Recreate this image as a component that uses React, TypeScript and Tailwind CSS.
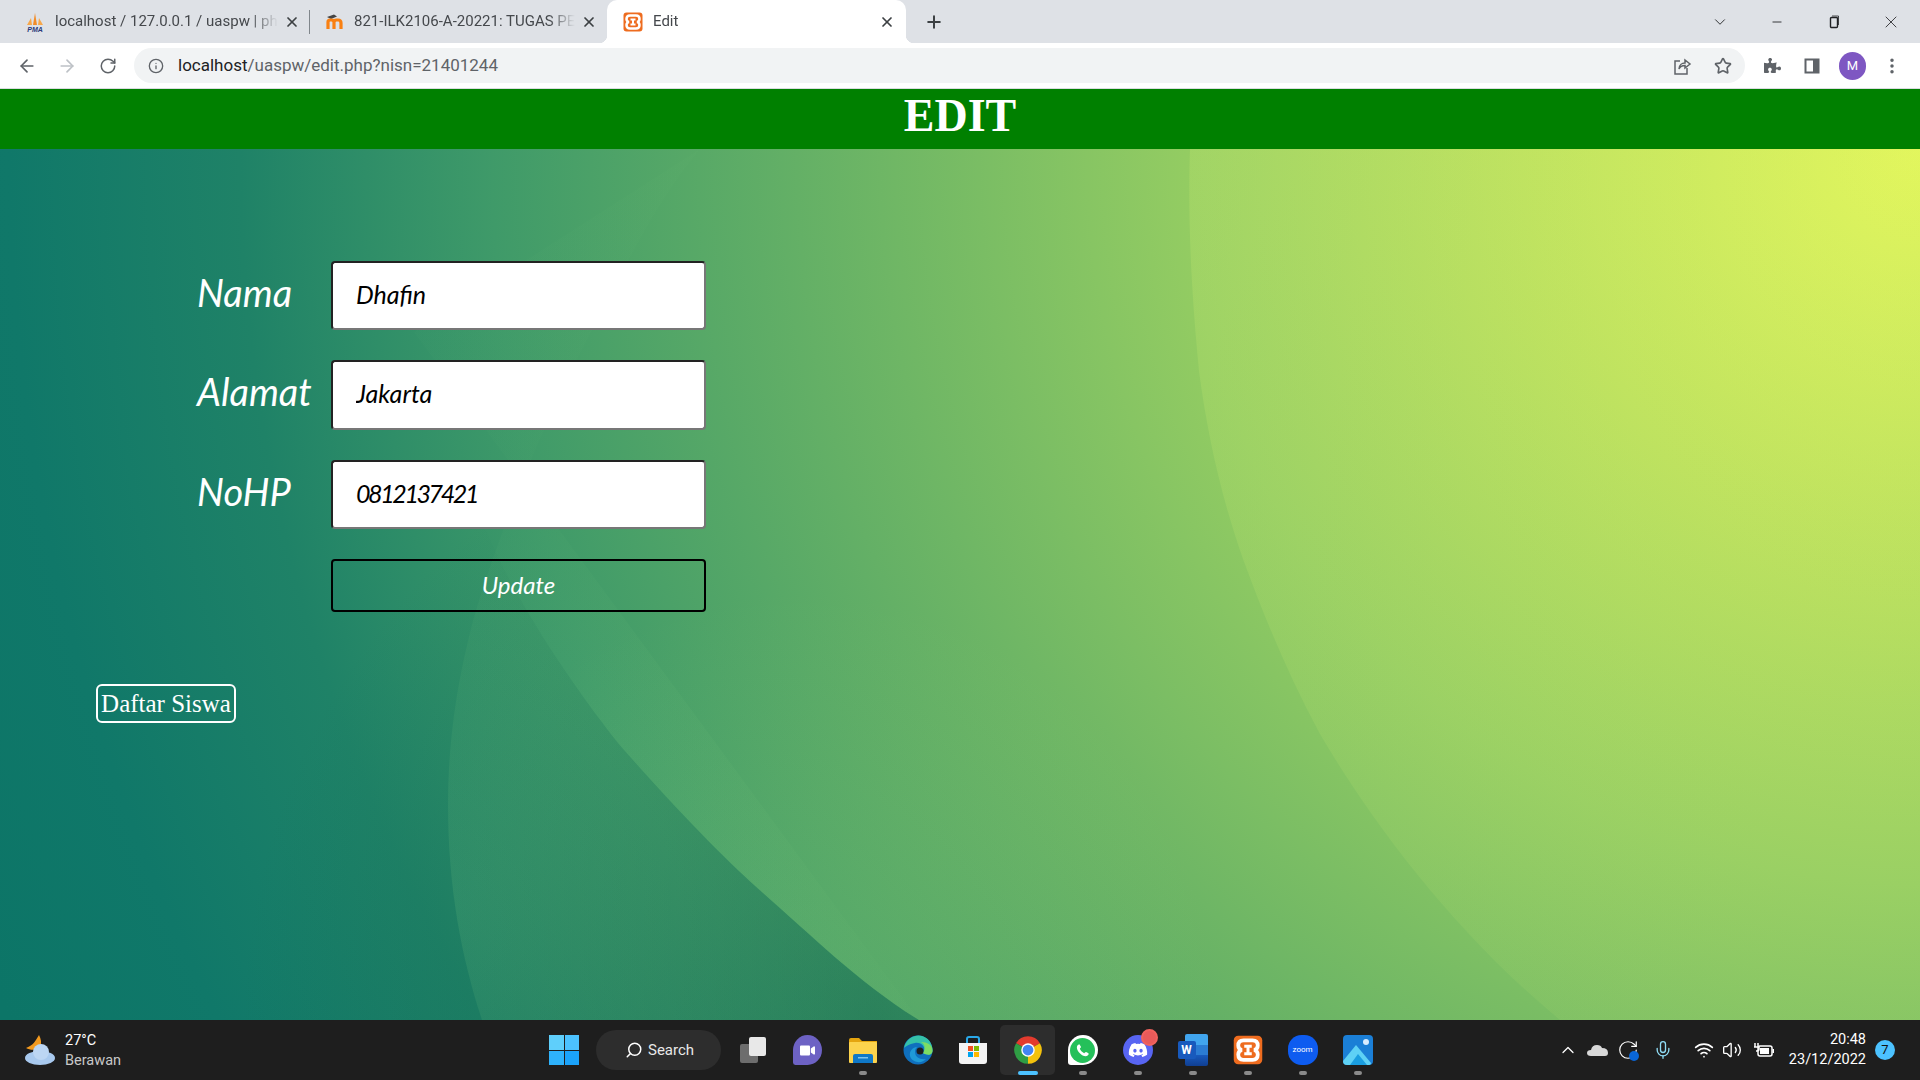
import {
  ArrowLeft,
  ArrowRight,
  ChevronDown,
  ChevronUp,
  Info,
  Mic,
  Minus,
  MoreVertical,
  Plus,
  RotateCw,
  Search,
  Star,
  Volume2,
  Wifi,
  X,
} from "lucide-react";
import type { ReactNode } from "react";
import { FaDiscord, FaPuzzlePiece, FaVideo } from "react-icons/fa";

function PmaIcon() {
  return (
    <svg width="20" height="20" viewBox="0 0 20 20">
      <path d="M2 13 L6 6 L7 13Z" fill="#f7a74a" />
      <path d="M8 13 L10 1 L12 13Z" fill="#f28c28" />
      <path d="M13 13 L14 6 L18 13Z" fill="#f7a74a" />
      <text x="10" y="19.5" textAnchor="middle" fontSize="7" fontWeight="700" fontStyle="italic" fill="#2b3a7a" fontFamily="Liberation Sans">
        PMA
      </text>
    </svg>
  );
}

function MoodleIcon() {
  return (
    <svg width="20" height="20" viewBox="0 0 20 20">
      <path d="M3 5 L10 2.5 L13 4.5 L7 7Z" fill="#444" />
      <path d="M4 17 V10 Q4 8 6 8 H7.5 Q10 8 10 10 V17 M10 10 Q10 8 12.5 8 H14 Q17 8 17 11 V17" fill="none" stroke="#f98012" strokeWidth="3.2" />
    </svg>
  );
}

function XamppIcon({ size = 20 }: { size?: number }) {
  return (
    <svg width={size} height={size} viewBox="0 0 20 20">
      <rect x="0.5" y="0.5" width="19" height="19" rx="3" fill="#ee6c1f" />
      <path d="M7 3.5 H13 Q16.5 3.5 16.5 7 Q16.5 9.5 14 10 Q16.5 10.5 16.5 13 Q16.5 16.5 13 16.5 H7 Q3.5 16.5 3.5 13 Q3.5 10.5 6 10 Q3.5 9.5 3.5 7 Q3.5 3.5 7 3.5Z" fill="none" stroke="#fff" strokeWidth="2.5" />
      <path d="M7.5 7.5 H12.5 M7.5 12.5 H12.5 M10 7.5 V12.5" stroke="#fff" strokeWidth="2" fill="none" />
    </svg>
  );
}

function Tab({ icon, title, box, active }: { icon: ReactNode; title: string; box: string; active?: boolean }) {
  return (
    <div className={`relative flex h-[43px] items-center ${box} ${active ? "rounded-t-[10px] bg-white" : ""}`}>
      {active && (
        <>
          <span className="absolute bottom-0 -left-[8px] h-[8px] w-[8px] bg-[radial-gradient(circle_at_0_0,transparent_8px,white_8.5px)]" />
          <span className="absolute -right-[8px] bottom-0 h-[8px] w-[8px] bg-[radial-gradient(circle_at_100%_0,transparent_8px,white_8.5px)]" />
        </>
      )}
      <span className="flex w-[30px] shrink-0">{icon}</span>
      <span className="flex-1 whitespace-nowrap text-[15px] text-[#45484c] [mask-image:linear-gradient(to_right,black_88%,transparent)]">
        {title}
      </span>
      <X size={16} strokeWidth={2.6} className="ml-[6px] shrink-0 text-[#3c4043]" />
    </div>
  );
}

function BrowserChrome() {
  return (
    <header className="shrink-0">
      <div className="flex h-[43px] items-center bg-[#dee1e6] pl-[8px]">
        <Tab icon={<PmaIcon />} title="localhost / 127.0.0.1 / uaspw | ph" box="w-[301px] pl-[17px] pr-[12px]" />
        <span className="h-[24px] w-px bg-[#80868b]" />
        <Tab icon={<MoodleIcon />} title="821-ILK2106-A-20221: TUGAS PE" box="w-[297px] pl-[14px] pr-[14px]" />
        <Tab icon={<XamppIcon />} title="Edit" box="w-[299px] pl-[16px] pr-[11px]" active />
        <Plus size={20} strokeWidth={2.4} className="ml-[18px] text-[#3c4043]" />
        <div className="ml-auto flex items-center text-[#202124]">
          <ChevronDown size={18} strokeWidth={1.2} className="mr-[41px]" />
          <Minus size={14} strokeWidth={1.5} className="mr-[43px]" />
          <svg width="14" height="14" viewBox="0 0 14 14" fill="none" stroke="currentColor" className="mr-[40px]">
            <rect x="3.5" y="2.5" width="7" height="10" rx="1" strokeWidth="1.4" />
            <path d="M5 1H11.5V10" strokeWidth="0.8" />
          </svg>
          <X size={20} strokeWidth={1} className="mr-[19px]" />
        </div>
      </div>
      <div className="flex h-[46px] items-center border-b border-[#dadce0] bg-white pl-[17px] pr-[17px]">
        <ArrowLeft size={20} strokeWidth={2} className="text-[#5f6368]" />
        <ArrowRight size={20} strokeWidth={2} className="ml-[20px] text-[#bdc1c6]" />
        <RotateCw size={18} strokeWidth={2} className="ml-[22px] text-[#5f6368]" />
        <div className="ml-[17px] flex h-[35px] w-[1611px] items-center rounded-full bg-[#f1f3f4] pl-[14px] pr-[13px]">
          <Info size={16} strokeWidth={2} className="text-[#5f6368]" />
          <span className="ml-[14px] text-[17px] text-[#5f6368]">
            <span className="text-[#202124]">localhost</span>/uaspw/edit.php?nisn=21401244
          </span>
          <svg width="20" height="20" viewBox="0 0 20 20" fill="none" stroke="#5f6368" strokeWidth="1.5" className="ml-auto mr-[22px]">
            <path d="M8 5H3V18H15V12" />
            <path d="M7 13C7 9 10 7 13 7V4L18 8L13 12V9.5C10 9.5 8 10.5 7 13Z" />
          </svg>
          <Star size={18} strokeWidth={2.2} className="text-[#5f6368]" />
        </div>
        <FaPuzzlePiece size={17} className="ml-[19px] text-[#5f6368]" />
        <svg width="16" height="16" viewBox="0 0 16 16" fill="none" className="ml-[23px]">
          <rect x="1.5" y="1.5" width="13" height="13" stroke="#5f6368" strokeWidth="2" />
          <rect x="9" y="1" width="6" height="14" fill="#5f6368" />
        </svg>
        <span className="ml-[19px] flex h-[28px] w-[27px] items-center justify-center rounded-full bg-[#7e57c2] text-[13px] text-white">M</span>
        <MoreVertical size={20} strokeWidth={2.2} className="ml-[16px] text-[#5f6368]" />
      </div>
    </header>
  );
}

function Wallpaper() {
  return (
    <svg className="absolute inset-0 h-full w-full" viewBox="0 0 1920 871" preserveAspectRatio="none">
      <defs>
        <radialGradient id="lensB" gradientUnits="userSpaceOnUse" cx="450" cy="760" r="420">
          <stop offset="0" stopColor="#8fdc8a" stopOpacity="0.13" />
          <stop offset="1" stopColor="#8fdc8a" stopOpacity="0.02" />
        </radialGradient>
        <radialGradient id="shadeC" gradientUnits="userSpaceOnUse" cx="880" cy="871" r="640">
          <stop offset="0" stopColor="#10664f" stopOpacity="0.55" />
          <stop offset="1" stopColor="#10664f" stopOpacity="0" />
        </radialGradient>
        <radialGradient id="lensC" gradientUnits="userSpaceOnUse" cx="800" cy="860" r="420">
          <stop offset="0" stopColor="#b4e870" stopOpacity="0.16" />
          <stop offset="1" stopColor="#b4e870" stopOpacity="0" />
        </radialGradient>
        <linearGradient id="lensA" gradientUnits="userSpaceOnUse" x1="1500" y1="0" x2="1500" y2="871">
          <stop offset="0" stopColor="#e4fb78" stopOpacity="0.17" />
          <stop offset="1" stopColor="#e4fb78" stopOpacity="0.07" />
        </linearGradient>
      </defs>
      <path d="M360 0 C380 90 395 140 414 183 C430 230 450 290 487 383 C510 440 560 520 618 594 C680 665 730 715 763 744 C810 785 860 835 919 871 H0 V0Z" fill="url(#shadeC)" />
      <path d="M700 0 C650 60 620 130 591 183 C550 260 499 381 473 472 C455 540 448 600 448 656 C448 740 462 810 482 871 H919 L414 183Z" fill="url(#lensB)" />
      <path d="M360 0 C380 90 395 140 414 183 C430 230 450 290 487 383 C510 440 560 520 618 594 C680 665 730 715 763 744 C810 785 860 835 919 871 H1920 V0Z" fill="url(#lensC)" />
      <path d="M1190 0 C1188 60 1190 130 1199 222 C1208 290 1222 350 1243 410 C1265 470 1290 530 1320 585 C1370 670 1450 780 1560 871 H1920 V0Z" fill="url(#lensA)" />
    </svg>
  );
}

const fields = [
  { label: "Nama", value: "Dhafin", spacing: "" },
  { label: "Alamat", value: "Jakarta", spacing: "" },
  { label: "NoHP", value: "0812137421", spacing: "tracking-[-2.4px]" },
];

function EditForm() {
  return (
    <main className="relative flex-1 overflow-hidden bg-[radial-gradient(circle_2100px_at_100%_0%,#e2f558_0%,#b8de5c_19%,#93cc62_35%,#3f9a69_68%,#1f8267_80%,#107869_91%,#0c7567_100%)] pl-[96px] pt-[111.8px]">
      <Wallpaper />
      <form className="relative ml-[101px] flex flex-col gap-[30px] font-[Lato,sans-serif] italic text-white">
        {fields.map((field) => (
          <div key={field.label} className="flex h-[69.5px] items-center">
            <label className="-mt-[7px] w-[134px] text-[38px]">{field.label}</label>
            <input
              readOnly
              value={field.value}
              className={`h-[69.5px] w-[375px] rounded-[4px] border-2 border-t-[#222] border-r-[#777] border-b-[#777] border-l-[#222] bg-white pb-[4px] pl-[23px] text-[25px] italic text-black outline-none ${field.spacing}`}
            />
          </div>
        ))}
        <button type="button" className="ml-[134px] h-[53px] w-[375px] rounded-[4px] border-2 border-black pb-[2px] text-[24px] text-white">
          Update
        </button>
      </form>
      <a href="#" className="relative mt-[72px] inline-block h-[39px] w-[140px] rounded-md border-2 border-white text-center font-['Liberation_Serif',serif] text-[25px] leading-[36px] text-white">
        Daftar Siswa
      </a>
    </main>
  );
}

function Slot({ children, dot }: { children: ReactNode; dot?: "grey" | "active" }) {
  return (
    <div className={`relative flex h-[50px] w-[55px] items-center justify-center rounded-[5px] ${dot === "active" ? "bg-[#2d2d2d]" : ""}`}>
      {children}
      {dot === "grey" && <span className="absolute bottom-[0px] h-[4px] w-[8px] rounded-full bg-[#8a8a8a]" />}
      {dot === "active" && <span className="absolute bottom-[0px] h-[4px] w-[20px] rounded-full bg-[#4cc2ff]" />}
    </div>
  );
}

function Taskbar() {
  return (
    <footer className="flex h-[60px] shrink-0 items-center bg-[#1e1e1e] text-white">
      <svg width="34" height="34" viewBox="0 0 34 34" className="ml-[23px] shrink-0">
        <path d="M16 2 C12 8 11 12 3 15 C8 18 15 17 17 14 C19 10 18 6 16 2Z" fill="#f39a1f" />
        <ellipse cx="17" cy="25" rx="15" ry="7" fill="#a8c9ee" />
        <circle cx="18" cy="19" r="8" fill="#bcd6f3" />
      </svg>
      <div className="ml-[8px] flex w-[80px] shrink-0 flex-col pt-[1px] text-[14.5px] leading-[20px]">
        <span>27°C</span>
        <span className="text-[#c8c8c8]">Berawan</span>
      </div>
      <div className="ml-[404px] grid h-[30px] w-[30px] shrink-0 grid-cols-2 gap-[1px]">
        <span className="bg-[#5fcffb]" />
        <span className="bg-[#4cc2ff]" />
        <span className="bg-[#2eb2fb]" />
        <span className="bg-[#1ba3fa]" />
      </div>
      <div className="ml-[17px] flex h-[40px] w-[125px] shrink-0 items-center rounded-full bg-[#2d2d2d] pl-[29px]">
        <Search size={18} strokeWidth={2} className="-scale-x-100" />
        <span className="ml-[5px] text-[15px] text-[#e8e8e8]">Search</span>
      </div>
      <div className="ml-[4px] flex items-center">
        <Slot>
          <span className="relative block h-[26px] w-[26px]">
            <span className="absolute bottom-0 left-0 h-[19px] w-[18px] rounded-[2px] bg-[#6d6d6d]" />
            <span className="absolute right-0 top-0 h-[19px] w-[17px] rounded-[2px] bg-[#e8e8e8]" />
          </span>
        </Slot>
        <Slot>
          <span className="flex h-[30px] w-[29px] items-center justify-center rounded-[50%_50%_50%_8%] bg-[#6d62c4]">
            <FaVideo size={15} className="text-white" />
          </span>
        </Slot>
        <Slot dot="grey">
          <svg width="30" height="30" viewBox="0 0 30 30">
            <path d="M1 5 Q1 3 3 3 H11 L14 6 H29 V27 H1Z" fill="#e5a50f" />
            <rect x="1" y="7" width="28" height="21" rx="1" fill="#fcd34d" />
            <path d="M5 28 V21 Q5 19 7 19 H23 Q25 19 25 21 V28Z" fill="#0f78c8" />
            <rect x="10" y="22" width="10" height="1.5" fill="#7cc4f0" />
          </svg>
        </Slot>
        <Slot>
          <svg width="30" height="30" viewBox="0 0 30 30">
            <circle cx="15" cy="15" r="14.5" fill="#0f6fbd" />
            <path d="M1 13 C3 3 12 0 16 0.5 C25 1 30 9 29.5 16 C29 21 24 20 20 18 C24 12 18 7 12 8 C6 9 2 12 1 13Z" fill="#35c1a8" />
            <path d="M29.5 16 C29 21 24 20 20 18 C23 14 22 9 18 7 C24 7 30 10 29.5 16Z" fill="#7ddc63" />
            <path d="M12 17 C12 22 17 25 23 24 C19 29 9 28 7 21 C6 16 10 12 14 12 C12.5 13.5 12 15 12 17Z" fill="#1f9ad6" />
            <circle cx="17" cy="16" r="3.5" fill="#1e1e1e" />
          </svg>
        </Slot>
        <Slot>
          <svg width="30" height="30" viewBox="0 0 30 30">
            <path d="M9 8 V4 Q9 2 11 2 H19 Q21 2 21 4 V8" fill="none" stroke="#29a8e8" strokeWidth="2" />
            <path d="M1 8 H29 V26 Q29 29 26 29 H4 Q1 29 1 26Z" fill="#f4f4f4" />
            <rect x="10" y="11" width="5" height="5" fill="#f25022" />
            <rect x="16" y="11" width="5" height="5" fill="#7fba00" />
            <rect x="10" y="17" width="5" height="5" fill="#00a4ef" />
            <rect x="16" y="17" width="5" height="5" fill="#ffb900" />
          </svg>
        </Slot>
        <Slot dot="active">
          <svg width="30" height="30" viewBox="0 0 24 24">
            <path d="M12 12 L2.47 6.5 A11 11 0 0 1 21.53 6.5Z" fill="#e33b2e" />
            <path d="M12 12 L21.53 6.5 A11 11 0 0 1 12 23Z" fill="#f4c20d" />
            <path d="M12 12 L12 23 A11 11 0 0 1 2.47 6.5Z" fill="#2f9e44" />
            <circle cx="12" cy="12" r="5.4" fill="#fff" />
            <circle cx="12" cy="12" r="4.3" fill="#4285f4" />
          </svg>
        </Slot>
        <Slot dot="grey">
          <span className="flex h-[30px] w-[30px] items-center justify-center rounded-[50%_50%_50%_10%] bg-white">
            <span className="flex h-[25px] w-[25px] items-center justify-center rounded-full bg-[#25c05a]">
              <svg width="15" height="15" viewBox="0 0 24 24" fill="#fff">
                <path d="M6.6 2 C5 2.5 3 4.5 3 7 C3 13 11 21 17 21 C19.5 21 21.5 19 22 17.4 C22 16.8 18.5 14.5 17.5 14.5 C16.5 14.5 15.5 16 15 16.2 C13 15.8 8.2 11 7.8 9 C8 8.5 9.5 7.5 9.5 6.5 C9.5 5.5 7.2 2 6.6 2Z" />
              </svg>
            </span>
          </span>
        </Slot>
        <Slot dot="grey">
          <span className="relative flex h-[30px] w-[30px] items-center justify-center rounded-full bg-[#5865f2]">
            <FaDiscord size={20} className="text-white" />
            <span className="absolute -right-[5px] -top-[6px] h-[17px] w-[17px] rounded-full border-2 border-[#f0625d] bg-[#e85a5a]" />
          </span>
        </Slot>
        <Slot dot="grey">
          <span className="relative block h-[32px] w-[30px]">
            <span className="absolute bottom-0 right-0 top-0 w-[23px] rounded-[2px] bg-[linear-gradient(#41a5ee_0%,#41a5ee_33%,#2b7cd3_33%,#2b7cd3_66%,#185abd_66%,#103f91_100%)]" />
            <span className="absolute left-0 top-[7px] flex h-[18px] w-[18px] items-center justify-center rounded-[2px] bg-[#185abd] text-[12px] font-bold">W</span>
          </span>
        </Slot>
        <Slot dot="grey">
          <XamppIcon size={30} />
        </Slot>
        <Slot dot="grey">
          <span className="flex h-[30px] w-[30px] items-center justify-center rounded-[45%] bg-[#0e5cf0] text-[8px]">zoom</span>
        </Slot>
        <Slot dot="grey">
          <svg width="30" height="30" viewBox="0 0 30 30">
            <rect width="30" height="30" rx="4" fill="#1b7fd6" />
            <circle cx="23" cy="7" r="3" fill="#d8ecff" />
            <path d="M0 26 L13 10 L28 28 Q28 30 25 30 H4 Q0 30 0 26Z" fill="#5ed1f5" />
            <path d="M7 30 L15 19 L24 30Z" fill="#1a9ee0" />
          </svg>
        </Slot>
      </div>
      <div className="ml-auto flex items-center">
        <ChevronUp size={20} strokeWidth={1.5} />
        <svg width="22" height="14" viewBox="0 0 22 14" className="ml-[9px]">
          <path d="M4 13 Q0 13 0 10 Q0 7 4 7 Q5 2 10 2 Q14 2 15 5 Q21 5 21 10 Q21 13 18 13Z" fill="#d8d8d8" />
        </svg>
        <span className="relative ml-[8px] flex h-[22px] w-[22px]">
          <RotateCw size={22} strokeWidth={1.3} />
          <span className="absolute bottom-[0px] right-[0px] h-[10px] w-[10px] rounded-full bg-[#0a66d8]" />
        </span>
        <Mic size={20} strokeWidth={1.6} className="ml-[14px] text-[#8fdcf5]" />
        <Wifi size={20} strokeWidth={2} className="ml-[21px]" />
        <Volume2 size={20} strokeWidth={1.6} className="ml-[8px]" />
        <svg width="20" height="16" viewBox="0 0 20 16" className="ml-[12px]">
          <path d="M1 1V5M4 1V5M0 5H5V7Q5 9 3 9H2" stroke="#fff" strokeWidth="1.5" fill="none" />
          <rect x="4" y="4" width="14" height="10" rx="2" fill="none" stroke="#fff" strokeWidth="1.5" />
          <rect x="6" y="6" width="9" height="6" fill="#fff" />
          <rect x="18.5" y="7" width="1.5" height="4" fill="#fff" />
        </svg>
        <div className="ml-[15px] flex flex-col items-end text-[14.5px] leading-[20px]">
          <span>20:48</span>
          <span>23/12/2022</span>
        </div>
        <span className="ml-[9px] mr-[25px] flex h-[20px] w-[20px] items-center justify-center rounded-full bg-[#4cc2ff] text-[13px] text-[#111]">7</span>
      </div>
    </footer>
  );
}

export default function App() {
  return (
    <div className="flex h-screen flex-col overflow-hidden font-[Roboto,sans-serif]">
      <BrowserChrome />
      <div className="flex h-[60px] shrink-0 items-center justify-center bg-[#008000] pb-[7px] font-['Liberation_Serif',serif] text-[46px] font-bold text-white">
        EDIT
      </div>
      <EditForm />
      <Taskbar />
    </div>
  );
}
